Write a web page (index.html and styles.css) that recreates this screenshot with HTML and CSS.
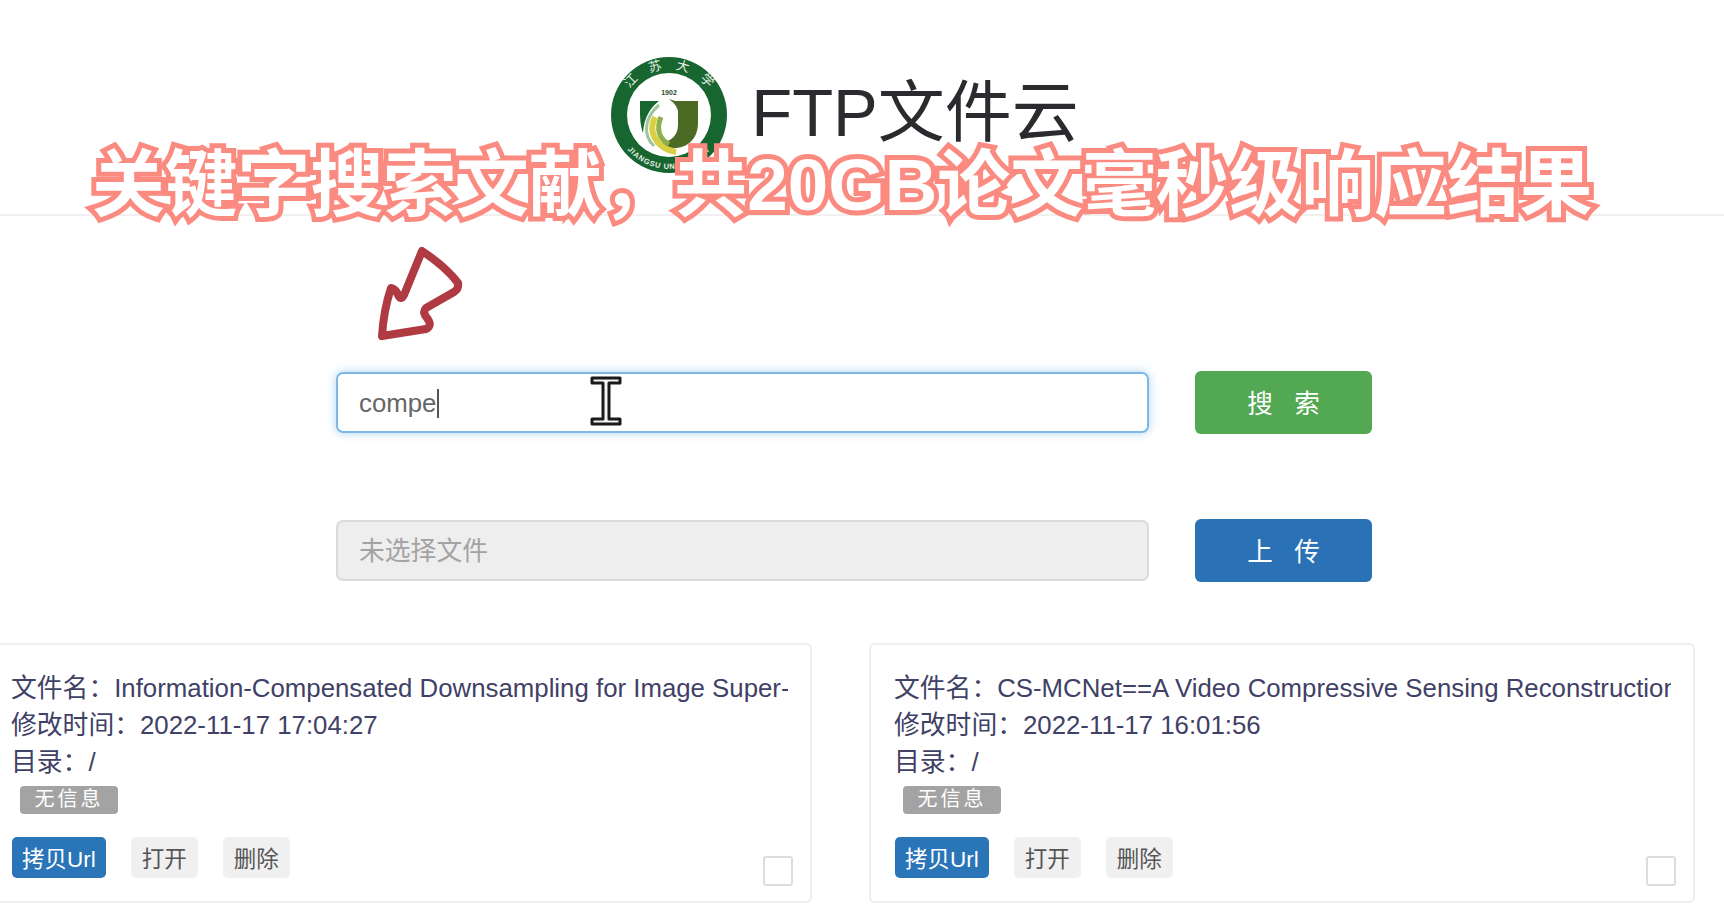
FILE: index.html
```html
<!DOCTYPE html>
<html lang="zh-CN">
<head>
<meta charset="utf-8">
<title>FTP文件云</title>
<link rel="stylesheet" href="styles.css">
</head>
<body>

<div class="header">
  <svg class="logo" viewBox="0 0 116 116" width="116" height="116">
    <defs>
      <path id="ringTop" d="M8 62 A50 50 0 0 1 108 62"/>
      <path id="ringBottom" d="M4 58 A54 54 0 0 0 112 58"/>
    </defs>
    <circle cx="58" cy="58" r="58" fill="#17662f"/>
    <circle cx="58" cy="58" r="42" fill="#fff"/>
    <text class="logo-cn"><textPath href="#ringTop" startOffset="50%" text-anchor="middle">江&#8195;苏&#8195;大&#8195;学</textPath></text>
    <text class="logo-en"><textPath href="#ringBottom" startOffset="50%" text-anchor="middle">JIANGSU UNIVERSITY</textPath></text>
    <text class="logo-year" x="58" y="38" text-anchor="middle">1902</text>
    <path d="M29 44 H48 C40 50 33 60 32 76 C29 68 29 58 29 52 Z" fill="#17662f"/>
    <path d="M58 42 L64 44 H87 V66 C87 82 76 91 64 91 C58 91 54 89 51 85 C60 85 67 78 67 68 V54 C66 49 62 45 58 42 Z" fill="#4b6b25"/>
    <path d="M48 48 C34 60 31 78 43 89" fill="none" stroke="#9cc79a" stroke-width="3"/>
    <path d="M44 60 C37 74 44 91 65 95" fill="none" stroke="#d8cf45" stroke-width="6"/>
    <path d="M50 60 C45 72 48 82 58 87" fill="none" stroke="#8db04a" stroke-width="5"/>
  </svg>
  <div class="title">FTP文件云</div>
</div>

<div class="forms">
  <div class="form-row">
    <div class="field field-focus">compe<span class="caret"></span>
      <svg class="ibeam" viewBox="0 0 32 50" width="32" height="50">
        <path d="M2 2 H30 V7 H19 V43 H30 V48 H2 V43 H13 V7 H2 Z" fill="#f4f4f4" stroke="#1a1a1a" stroke-width="3" stroke-linejoin="round"/>
      </svg>
    </div>
    <button class="btn-big btn-green">搜&nbsp;&nbsp;&nbsp;索</button>
  </div>
  <div class="form-row">
    <div class="field field-disabled">未选择文件</div>
    <button class="btn-big btn-blue">上&nbsp;&nbsp;&nbsp;传</button>
  </div>
</div>

<div class="cards">
  <div class="card">
    <div class="line">文件名：Information-Compensated Downsampling for Image Super-Resolution</div>
    <div class="line">修改时间：2022-11-17 17:04:27</div>
    <div class="line">目录：/</div>
    <span class="tag">无信息</span>
    <div class="actions">
      <button class="btn btn-primary">拷贝Url</button>
      <button class="btn">打开</button>
      <button class="btn">删除</button>
      <span class="check"></span>
    </div>
  </div>
  <div class="card">
    <div class="line">文件名：CS-MCNet==A Video Compressive Sensing Reconstruction Network with Interpretable Motion Compensation</div>
    <div class="line">修改时间：2022-11-17 16:01:56</div>
    <div class="line">目录：/</div>
    <span class="tag">无信息</span>
    <div class="actions">
      <button class="btn btn-primary">拷贝Url</button>
      <button class="btn">打开</button>
      <button class="btn">删除</button>
      <span class="check"></span>
    </div>
  </div>
</div>

<!-- 视频上叠加的字幕和箭头 -->
<div class="caption">关键字搜索文献，共20GB论文毫秒级响应结果</div>
<svg class="arrow" viewBox="0 0 90 100" width="90" height="100">
  <path d="M6 91 C7 75 11 55 15 43 Q20 44 22 50 Q25 56 28 50 L46 6 Q70 22 82 38 Q83 44 78 47 L50 63 Q46 67 51 73 Q57 81 50 84 Z" fill="none" stroke="#b03a42" stroke-width="8" stroke-linejoin="round"/>
</svg>

</body>
</html>
```

FILE: styles.css
```css
html, body {
  margin: 0;
  height: 911px;
  overflow: hidden;
  background-color: #ffffff;
  font-family: "Liberation Sans", "Noto Sans CJK SC", sans-serif;
  font-size: 25.8px;
  color: #3f4166;
}
.header {
  height: 216px;
  border-bottom: 2px solid #f0f0f0;
  display: flex;
  justify-content: center;
  gap: 24px;
  padding-top: 57px;
  padding-right: 34px;
  box-sizing: border-box;
}
.logo {
  flex: none;
}
.logo-cn {
  font-size: 13px;
  font-family: "Noto Sans CJK SC", sans-serif;
  fill: #e8f0e4;
}
.logo-en {
  font-size: 7.5px;
  font-weight: bold;
  fill: #e8f0e4;
  letter-spacing: 0.8px;
}
.logo-year {
  font-size: 7px;
  font-weight: bold;
  fill: #2c4a2c;
}
.title {
  font-size: 67px;
  line-height: 1;
  padding-top: 22px;
  color: #2b2b2f;
}
.forms {
  padding-top: 155px;
  margin-left: 336px;
  display: flex;
  flex-direction: column;
  gap: 85px;
}
.form-row {
  display: flex;
  gap: 46px;
  align-items: center;
}
.field {
  position: relative;
  width: 813px;
  height: 61px;
  box-sizing: border-box;
  padding-left: 21px;
  line-height: 58px;
  border-radius: 7px;
  border: 2px solid #cccccc;
}
.field-focus {
  border-color: #7db7e6;
  box-shadow: 0 0 10px rgba(102, 175, 233, 0.55);
  color: #666666;
}
.field-disabled {
  background-color: #eeeeee;
  border-color: #dadada;
  color: #a3a3a3;
}
.caret {
  display: inline-block;
  width: 2px;
  height: 29px;
  margin-left: 1px;
  vertical-align: -6px;
  background-color: #555555;
}
.ibeam {
  position: absolute;
  left: 252px;
  top: 2px;
}
.btn-big {
  width: 177px;
  height: 63px;
  padding-bottom: 3px;
  border: none;
  border-radius: 6px;
  font-family: inherit;
  font-size: 25.6px;
  color: #ffffff;
}
.btn-green {
  background-color: #53a853;
}
.btn-blue {
  background-color: #2a72b5;
}
.cards {
  margin-left: -14px;
  margin-top: 61px;
  display: grid;
  grid-template-columns: 826px 826px;
  gap: 57px;
}
.card {
  height: 260px;
  box-sizing: border-box;
  padding: 25px 22px 0 23px;
  border: 2px solid #eeeeee;
  border-radius: 6px;
  background-color: #ffffff;
}
.line {
  line-height: 36.8px;
  white-space: nowrap;
  overflow: hidden;
}
.tag {
  display: inline-block;
  margin: 6px 0 0 9px;
  width: 98px;
  height: 28px;
  line-height: 27px;
  text-align: center;
  font-size: 20px;
  letter-spacing: 3px;
  color: #ffffff;
  background-color: #a3a3a3;
  border-radius: 4px;
}
.actions {
  display: flex;
  align-items: flex-start;
  gap: 25px;
  margin-top: 23px;
  margin-left: 1px;
}
.btn {
  height: 41px;
  min-width: 67px;
  padding: 0 10px 2px;
  border: none;
  border-radius: 5px;
  font-family: inherit;
  font-size: 22.5px;
  color: #555555;
  background-color: #f0f0f0;
}
.btn-primary {
  color: #ffffff;
  background-color: #2a74b8;
}
.check {
  width: 30px;
  height: 30px;
  box-sizing: border-box;
  margin: 19px -5px 0 auto;
  border: 2px solid #dddddd;
  border-radius: 3px;
}
.caption {
  position: absolute;
  left: 92px;
  top: 135px;
  white-space: nowrap;
  font-family: "Liberation Sans", "Noto Sans CJK SC", sans-serif;
  font-size: 72.8px;
  line-height: 100px;
  font-weight: bold;
  color: #ffffff;
  -webkit-text-stroke: 10px #fb8a80;
  paint-order: stroke fill;
}
.arrow {
  position: absolute;
  left: 376px;
  top: 245px;
}
```
